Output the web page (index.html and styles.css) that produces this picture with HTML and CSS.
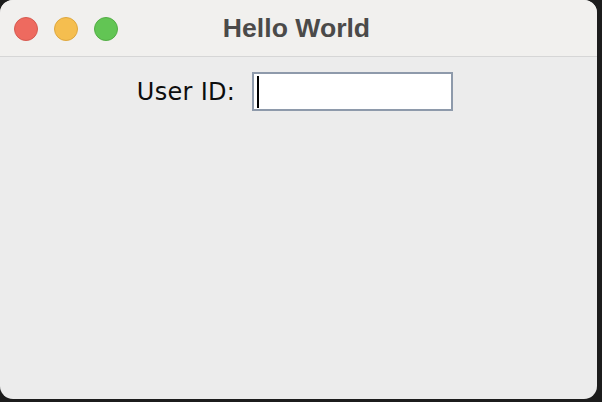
FILE: index.html
```html
<!DOCTYPE html>
<html>
<head>
<meta charset="utf-8">
<title>Hello World</title>
<link rel="stylesheet" href="styles.css">
</head>
<body>
<div class="window">
  <div class="titlebar">
    <div class="lights">
      <span class="light red"></span>
      <span class="light yellow"></span>
      <span class="light green"></span>
    </div>
    <div class="title">Hello World</div>
    <div class="spacer"></div>
  </div>
  <div class="content">
    <div class="row">
      <label class="label">User ID:</label>
      <div class="field"><span class="caret"></span></div>
    </div>
  </div>
</div>
</body>
</html>
```
FILE: styles.css
```css
html, body {
  margin: 0;
  padding: 0;
  background: #1c1c1c;
  width: 602px;
  height: 402px;
  overflow: hidden;
}
.window {
  width: 597px;
  height: 399px;
  border-radius: 13px;
  overflow: hidden;
  background: #ececec;
  display: flex;
  flex-direction: column;
}
.titlebar {
  height: 56px;
  flex: none;
  background: #f1f0ee;
  border-bottom: 1px solid #d6d6d6;
  display: grid;
  grid-template-columns: 1fr auto 1fr;
  align-items: center;
}
.lights {
  display: flex;
  gap: 16px;
  padding-left: 14px;
  padding-top: 1px;
}
.light {
  width: 22px;
  height: 22px;
  border-radius: 50%;
  border: 1px solid;
}
.red { background: #ee6a5f; border-color: #d65a50; }
.yellow { background: #f5be4f; border-color: #dea73e; }
.green { background: #62c554; border-color: #53ad45; }
.title {
  font-family: "Liberation Sans", Arial, sans-serif;
  font-weight: bold;
  font-size: 26.6px;
  color: #4b4a49;
  padding-right: 4px;
}
.content {
  flex: 1;
  padding-top: 15px;
}
.row {
  display: flex;
  justify-content: center;
  align-items: center;
  gap: 17px;
  padding-right: 7px;
}
.label {
  font-family: "DejaVu Sans", sans-serif;
  font-size: 24px;
  letter-spacing: 0.3px;
  color: #0d0d0d;
  padding-top: 1px;
}
.field {
  width: 194px;
  height: 35px;
  border: 2px solid #8e9aab;
  background: #fff;
  display: flex;
  align-items: center;
  padding-left: 3px;
  box-sizing: content-box;
}
.caret {
  width: 2px;
  height: 32px;
  background: #000;
}
```
